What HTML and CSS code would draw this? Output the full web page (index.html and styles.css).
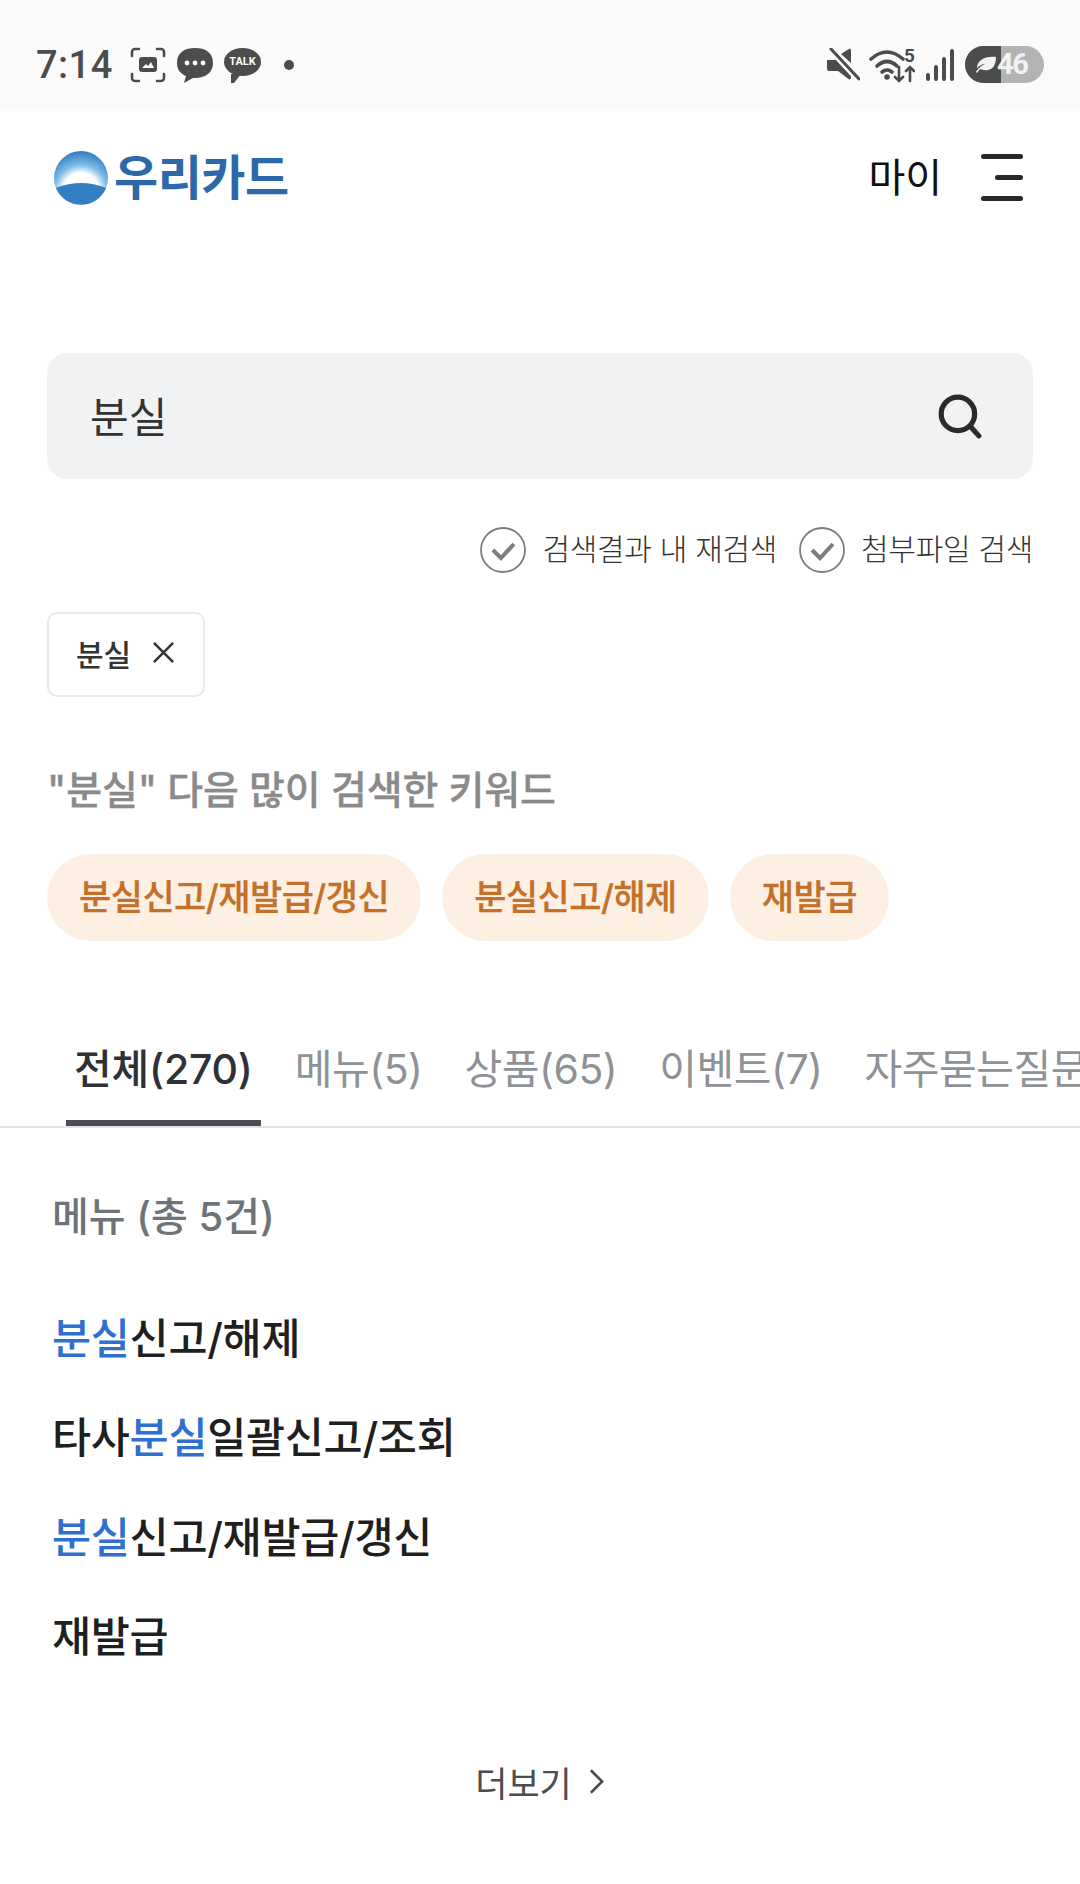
FILE: index.html
```html
<!DOCTYPE html>
<html lang="ko">
<head>
    <meta charset="UTF-8">
    <meta name="viewport" content="width=device-width, initial-scale=1.0">
    <title>우리카드 검색</title>
    <link rel="stylesheet" href="styles.css">
</head>
<body>
    <div class="status-bar">
        <div class="status-left">
            <span class="clock">7:14</span>
            <svg class="ic-shot" viewBox="0 0 36 36" fill="none" stroke="#4c4c4c" stroke-width="2.6" stroke-linecap="round">
                <path d="M2 9V5a3 3 0 0 1 3-3h4M27 2h4a3 3 0 0 1 3 3v4M34 27v4a3 3 0 0 1-3 3h-4M9 34H5a3 3 0 0 1-3-3v-4"/>
                <rect x="9" y="10" width="18" height="15" rx="3" fill="#4c4c4c" stroke="none"/>
                <path d="M12 21l4-4 2 2 3-4 3 6z" fill="#fafafa" stroke="none"/>
            </svg>
            <svg class="ic-msg" viewBox="0 0 36 36">
                <path d="M18 1c10 0 18 4 18 15 0 10-8 15-18 15l-2 0-9 5 2-7C4 27 0 23 0 16 0 5 8 1 18 1z" fill="#4c4c4c"/>
                <circle cx="10" cy="16" r="2.4" fill="#fafafa"/>
                <circle cx="18" cy="16" r="2.4" fill="#fafafa"/>
                <circle cx="26" cy="16" r="2.4" fill="#fafafa"/>
            </svg>
            <span class="talk-icon"><span class="talk-label">TALK</span></span>
            <span class="status-dot"></span>
        </div>
        <div class="status-right">
            <svg class="ic-mute" viewBox="0 0 34 34">
                <path d="M1 12h8l3-3 13 13v8a1.5 1.5 0 0 1-2.500 1L12 23H3a2 2 0 0 1-2-2z" fill="#4c4c4c"/>
                <path d="M15 6l8-5a1.500 1.500 0 0 1 2 1.300V15z" fill="#4c4c4c"/>
                <path d="M4 2l28 30" stroke="#fafafa" stroke-width="5"/>
                <path d="M5 1l28 30" stroke="#4c4c4c" stroke-width="3" stroke-linecap="round"/>
            </svg>
            <svg class="ic-wifi" viewBox="0 0 46 36" fill="none" stroke="#4c4c4c" stroke-width="3.600" stroke-linecap="round">
                <path d="M2 11Q18-3 34 11"/>
                <path d="M8 18Q18 9 28 18"/>
                <path d="M13 24Q18 20 23 24"/>
                <circle cx="18" cy="29" r="2.800" fill="#4c4c4c" stroke="none"/>
                <path d="M30 19v14m-4-4l4 4 4-4M41 33V19m-4 4l4-4 4 4" stroke-width="2.600"/>
            </svg>
            <span class="wifi-num">5</span>
            <div class="signal">
                <span class="sig-bar sig-1"></span>
                <span class="sig-bar sig-2"></span>
                <span class="sig-bar sig-3"></span>
                <span class="sig-bar sig-4"></span>
            </div>
            <div class="battery">
                <div class="battery-fill">
                    <svg class="ic-leaf" viewBox="0 0 22 18">
                        <path d="M21 1c0 9-4 14-12 13-2 0-3-1-4-1-1 1-2 3-3 4l-1-1c1-2 4-6 9-8-3 0-6 2-8 4C2 5 9 0 21 1z" fill="#f2f2f2"/>
                    </svg>
                </div>
                <span class="battery-num">46</span>
            </div>
        </div>
    </div>

    <header class="top-header">
        <div class="logo">
            <svg class="logo-mark" viewBox="0 0 54 54">
                <defs>
                    <radialGradient id="logoDome" gradientUnits="userSpaceOnUse" cx="27" cy="40" r="40">
                        <stop offset="0.45" stop-color="#ffffff"/>
                        <stop offset="0.65" stop-color="#7fbde6"/>
                        <stop offset="1" stop-color="#2f7cc1"/>
                    </radialGradient>
                </defs>
                <circle cx="27" cy="27" r="27" fill="url(#logoDome)"/>
                <path d="M2 37Q27 27 52 37A27 27 0 0 1 2 37z" fill="#347fc4"/>
            </svg>
            <span class="logo-text">우리카드</span>
        </div>
        <div class="header-right">
            <span class="my-link">마이</span>
            <div class="menu-btn">
                <span class="menu-line"></span>
                <span class="menu-line short"></span>
                <span class="menu-line"></span>
            </div>
        </div>
    </header>

    <main class="search-page">
        <div class="search-box">
            <span class="search-value">분실</span>
            <svg class="ic-search" viewBox="0 0 44 44" fill="none" stroke="#2b2b2b" stroke-width="5" stroke-linecap="round">
                <circle cx="20" cy="20" r="16"/>
                <path d="M32 32l8 9"/>
            </svg>
        </div>

        <div class="search-options">
            <label class="option">
                <svg class="ic-check" viewBox="0 0 46 46" fill="none">
                    <circle cx="23" cy="23" r="22" stroke="#7d7d7d" stroke-width="1.800"/>
                    <path d="M13 23l8 8 13-14" stroke="#7d7d7d" stroke-width="4"/>
                </svg>
                <span class="option-text">검색결과 내 재검색</span>
            </label>
            <label class="option">
                <svg class="ic-check" viewBox="0 0 46 46" fill="none">
                    <circle cx="23" cy="23" r="22" stroke="#7d7d7d" stroke-width="1.800"/>
                    <path d="M13 23l8 8 13-14" stroke="#7d7d7d" stroke-width="4"/>
                </svg>
                <span class="option-text">첨부파일 검색</span>
            </label>
        </div>

        <div class="tag-row">
            <div class="tag">
                분실
                <svg class="ic-close" viewBox="0 0 24 24" fill="none" stroke="#333333" stroke-width="2.600">
                    <path d="M2 2l20 20M22 2L2 22"/>
                </svg>
            </div>
        </div>

        <h2 class="related-title">"분실" 다음 많이 검색한 키워드</h2>
        <div class="pill-row">
            <a class="pill">분실신고/재발급/갱신</a>
            <a class="pill">분실신고/해제</a>
            <a class="pill">재발급</a>
        </div>
    </main>

    <nav class="tabs">
        <a class="tab active">전체(270)</a>
        <a class="tab">메뉴(5)</a>
        <a class="tab">상품(65)</a>
        <a class="tab">이벤트(7)</a>
        <a class="tab">자주묻는질문</a>
    </nav>

    <section class="results">
        <h3 class="results-title">메뉴 (총 5건)</h3>
        <ul class="result-list">
            <li><em>분실</em>신고/해제</li>
            <li>타사<em>분실</em>일괄신고/조회</li>
            <li><em>분실</em>신고/재발급/갱신</li>
            <li>재발급</li>
        </ul>
        <a class="more-link">
            더보기
            <svg class="ic-chevron" viewBox="0 0 16 28" fill="none" stroke="#4a4d52" stroke-width="2.800">
                <path d="M2 2l12 12L2 26"/>
            </svg>
        </a>
    </section>
</body>
</html>
```

FILE: styles.css
```css
* {
    margin: 0;
    padding: 0;
    box-sizing: border-box;
    font-family: 'Inter', 'Noto Sans CJK KR', sans-serif;
}

body {
    background-color: #ffffff;
    color: #1f1f1f;
    width: 1080px;
    height: 1884px;
    overflow: hidden;
}

/* status bar */
.status-bar {
    height: 111px;
    background: #fafafa;
    display: flex;
    justify-content: space-between;
    align-items: center;
    padding: 18px 36px 0 36px;
}

.status-left {
    display: flex;
    align-items: center;
}

.clock {
    font-family: 'Roboto', sans-serif;
    font-size: 38px;
    font-weight: 500;
    letter-spacing: 0.5px;
    color: #4c4c4c;
    width: 94px;
}

.ic-shot {
    width: 36px;
    height: 36px;
    margin-right: 11px;
}

.ic-msg {
    width: 36px;
    height: 36px;
    margin-right: 11px;
}

.talk-icon {
    width: 37px;
    height: 28px;
    border-radius: 50%;
    background: #4c4c4c;
    position: relative;
    display: flex;
    align-items: center;
    justify-content: center;
    margin-bottom: 6px;
}

.talk-icon::after {
    content: '';
    position: absolute;
    left: 7px;
    bottom: -7px;
    border-left: 3px solid #4c4c4c;
    border-right: 7px solid transparent;
    border-top: 9px solid #4c4c4c;
}

.talk-label {
    font-family: 'Roboto', sans-serif;
    font-size: 11px;
    font-weight: 700;
    color: #fafafa;
}

.status-dot {
    width: 10px;
    height: 10px;
    border-radius: 50%;
    background: #4c4c4c;
    margin-left: 23px;
}

.status-right {
    display: flex;
    align-items: center;
    position: relative;
}

.ic-mute {
    width: 34px;
    height: 34px;
    margin-right: 9px;
}

.ic-wifi {
    width: 46px;
    height: 36px;
    margin-top: 2px;
}

.wifi-num {
    position: absolute;
    left: 78px;
    top: 3px;
    line-height: 14px;
    font-family: 'Roboto', sans-serif;
    font-size: 19px;
    font-weight: 700;
    color: #4c4c4c;
}

.signal {
    display: flex;
    align-items: flex-end;
    gap: 4px;
    height: 33px;
    margin: 0 11px 0 11px;
}

.sig-bar {
    width: 4px;
    background: #4c4c4c;
    border-radius: 2px;
}

.sig-1 { height: 8px; }
.sig-2 { height: 16px; }
.sig-3 { height: 24px; }
.sig-4 { height: 32px; }

.battery {
    width: 79px;
    height: 37px;
    border-radius: 19px;
    background: #b3b3b3;
    overflow: hidden;
    position: relative;
}

.battery-fill {
    width: 36px;
    height: 100%;
    background: #4c4c4c;
    display: flex;
    align-items: center;
    padding-left: 10px;
}

.ic-leaf {
    width: 22px;
    height: 18px;
}

.battery-num {
    position: absolute;
    left: 32px;
    top: 0;
    line-height: 37px;
    font-family: 'Roboto', sans-serif;
    font-size: 29px;
    font-weight: 700;
    letter-spacing: -1.500px;
    color: #f2f2f2;
}

/* header */
.top-header {
    height: 134px;
    display: flex;
    justify-content: space-between;
    align-items: center;
    padding: 0 57px 0 54px;
}

.logo {
    display: flex;
    align-items: center;
    gap: 6px;
}

.logo-mark {
    width: 54px;
    height: 54px;
}

.logo-text {
    font-size: 48px;
    font-weight: 700;
    line-height: 54px;
    letter-spacing: -0.500px;
    color: #2d69a8;
}

.header-right {
    display: flex;
    align-items: center;
    gap: 39px;
}

.my-link {
    font-size: 40px;
    padding-bottom: 6px;
    color: #111111;
}

.menu-btn {
    width: 42px;
    display: flex;
    flex-direction: column;
    align-items: flex-end;
    gap: 16px;
    margin-bottom: 2px;
}

.menu-line {
    width: 42px;
    height: 5px;
    border-radius: 3px;
    background: #26282b;
}

.menu-line.short {
    width: 28px;
}

/* search */
.search-page {
    padding: 108px 47px 0 47px;
}

.search-box {
    height: 126px;
    border-radius: 20px;
    background: #f1f2f4;
    display: flex;
    justify-content: space-between;
    align-items: center;
    padding: 0 50px 0 43px;
}

.search-value {
    font-size: 42px;
    padding-bottom: 4px;
    color: #333333;
}

.ic-search {
    width: 46px;
    height: 46px;
}

.search-options {
    display: flex;
    justify-content: flex-end;
    gap: 22px;
    margin-top: 47px;
}

.option {
    height: 48px;
    display: flex;
    align-items: center;
    gap: 16px;
    font-size: 30px;
    font-weight: 300;
    letter-spacing: -0.300px;
    color: #333333;
}

.option-text {
    padding-bottom: 6px;
}

.ic-check {
    width: 46px;
    height: 46px;
}

.tag-row {
    display: flex;
    margin-top: 38px;
}

.tag {
    height: 85px;
    width: 158px;
    border: 2px solid #e9eaec;
    border-radius: 10px;
    display: flex;
    align-items: center;
    gap: 21px;
    padding: 0 0 4px 27px;
    font-size: 30px;
    font-weight: 500;
    color: #333333;
}

.ic-close {
    width: 23px;
    height: 23px;
}

.related-title {
    margin-top: 65px;
    font-size: 39px;
    line-height: 56px;
    font-weight: 500;
    letter-spacing: -0.100px;
    -webkit-text-stroke: 0.3px #8a8a8a;
    color: #8a8a8a;
}

.pill-row {
    display: flex;
    gap: 21px;
    margin-top: 36px;
}

.pill {
    height: 87px;
    border-radius: 44px;
    background: #fdf0e3;
    display: flex;
    align-items: center;
    padding: 0 32px 6px 32px;
    font-size: 35px;
    font-weight: 500;
    letter-spacing: -0.500px;
    -webkit-text-stroke: 0.3px #c4702a;
    color: #c4702a;
}

/* tabs */
.tabs {
    display: flex;
    margin-top: 78px;
    padding-left: 66px;
    border-bottom: 2px solid #dfe1e5;
    height: 109px;
    overflow: hidden;
    white-space: nowrap;
}

.tab {
    height: 107px;
    padding: 22px 8px 0 8px;
    margin-right: 26px;
    font-size: 41px;
    line-height: 56px;
    letter-spacing: -0.500px;
    color: #8e9297;
}

.tab.active {
    font-weight: 500;
    letter-spacing: -0.200px;
    color: #2e3136;
    border-bottom: 6px solid #4a4d52;
}

/* results */
.results {
    padding: 61px 53px 0 52px;
}

.results-title {
    font-size: 40px;
    line-height: 56px;
    font-weight: 500;
    color: #6f7378;
}

.result-list {
    list-style: none;
    margin-top: 63px;
}

.result-list li {
    height: 99.300px;
    font-size: 42.500px;
    line-height: 62px;
    font-weight: 500;
    letter-spacing: -0.300px;
    color: #1f1f1f;
}

.result-list em {
    font-style: normal;
    color: #2f6fd0;
}

.more-link {
    display: flex;
    justify-content: center;
    align-items: center;
    gap: 17px;
    margin-top: 51px;
    font-size: 35px;
    font-weight: 400;
    color: #4a4d52;
}

.ic-chevron {
    width: 15px;
    height: 27px;
}
```
